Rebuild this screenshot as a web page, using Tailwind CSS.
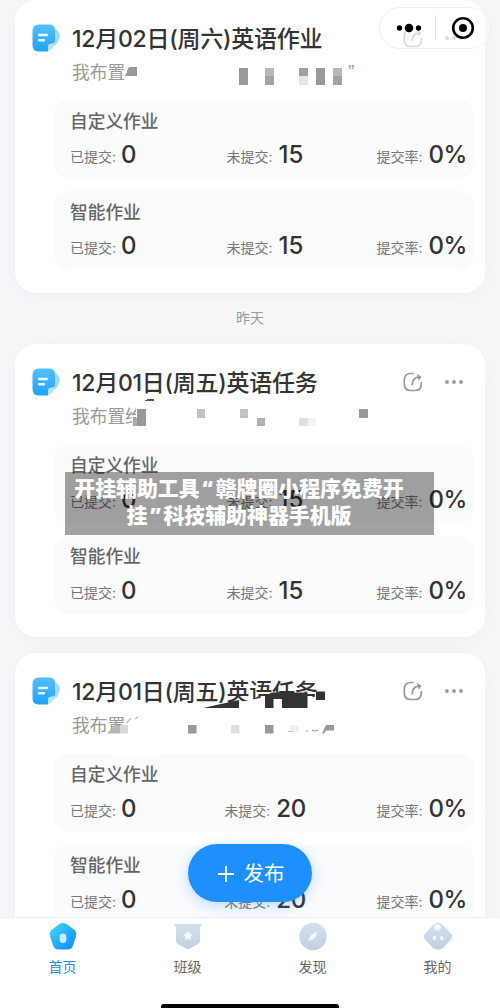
<!DOCTYPE html>
<html lang="zh-CN">
<head>
<meta charset="utf-8">
<title>作业</title>
<script src="https://cdn.jsdelivr.net/npm/@tailwindcss/browser@4"></script>
</head>
<body class="font-['Inter','Noto_Sans_CJK_SC',sans-serif] bg-[#f5f7f9]">
<svg width="0" height="0" class="absolute">
  <defs>
    <linearGradient id="doc" x1="0" y1="0" x2="0" y2="1"><stop offset="0" stop-color="#55bffa"/><stop offset="1" stop-color="#1ea2fb"/></linearGradient>
    <linearGradient id="home" x1="0" y1="0" x2="1" y2="1"><stop offset="0" stop-color="#45d8fb"/><stop offset="1" stop-color="#0e86fd"/></linearGradient>
    <linearGradient id="gray" x1="0" y1="0" x2="0" y2="1"><stop offset="0" stop-color="#d6e0eb"/><stop offset="1" stop-color="#c0cfe1"/></linearGradient>
    <symbol id="i-doc" viewBox="0 0 30 28">
      <path d="M20 4 24 5.500Q29 9 28 13L25 20 18 24Z" fill="#a3dafb"/>
      <path d="M6.500 .5H17Q23 .5 23 6V18Q22 19.500 19 19.500 16 20 16 24V27.500H6.500Q.5 27.500.5 21V7Q.5.500 6.500 .5Z" fill="url(#doc)"/>
      <path d="M16 27.500V23Q16 20 19 20 22 20 23 18.500 22 25 16 27.500Z" fill="#b5e4fd"/>
      <path d="M7 11H15M7 16.300H12" stroke="#e8f8ff" stroke-width="2.400" stroke-linecap="round"/>
    </symbol>
    <symbol id="i-share" viewBox="0 0 20 20">
      <path d="M10 1.500H8Q1.300 1.500 1.300 8V12Q1.300 18.500 8 18.500H12Q18.300 18.500 18.300 12V10.500" fill="none" stroke="#999" stroke-width="1.700" stroke-linecap="round"/>
      <path d="M9.200 12.500Q9.400 6.500 15 5.200" fill="none" stroke="#999" stroke-width="1.800" stroke-linecap="round"/>
      <path d="M13.700 1.700 18.500 4.700 15.700 8.700Z" fill="#999"/>
    </symbol>
    <symbol id="i-dots" viewBox="0 0 18 4"><g fill="#999"><circle cx="2" cy="2" r="1.900"/><circle cx="9" cy="2" r="1.900"/><circle cx="16" cy="2" r="1.900"/></g></symbol>
  </defs>
</svg>
<div class="relative w-[500px] h-[1008px] overflow-hidden flex flex-col">
  <main class="h-[917px] shrink-0 overflow-hidden px-[15px] flex flex-col">

    <section class="relative shrink-0 h-[293px] rounded-[21px] bg-white shadow-[0_4px_22px_rgba(40,60,90,0.035)] pl-[39px] pr-[11px] pt-[24px]">
      <div class="flex items-center h-[28px] -ml-[22px]">
        <svg class="w-[30px] h-[28px]"><use href="#i-doc"/></svg>
        <h2 class="ml-[10px] pt-[2px] text-[23px] leading-[28px] tracking-[-0.25px] font-medium text-[#333] whitespace-nowrap">12月02日(周六)英语作业</h2>
        <div class="ml-auto mr-[11px] flex items-center gap-[22px] opacity-60"><svg class="w-[20px] h-[20px]"><use href="#i-share"/></svg><svg class="w-[18px] h-[4px]"><use href="#i-dots"/></svg></div>
      </div>
      <p class="mt-[7px] ml-[18px] h-[28px] text-[17.700px] leading-[28px] text-[#999]">我布置</p>
      <div class="mt-[13px] flex flex-col gap-[13px]">
        <div class="h-[78px] rounded-[14px] bg-[#fafbfd] pl-[16px] pr-[7px] pt-[10px]">
          <h3 class="h-[24px] text-[17.700px] leading-[24px] font-medium text-[#666]">自定义作业</h3>
          <div class="mt-[7px] flex h-[28px] leading-[28px] whitespace-nowrap text-[14px] text-[#777]">
            <div class="w-[125px]">已提交: <b class="ml-[1px] align-[-1px] text-[24px] font-medium text-[#333]">0</b></div>
            <div class="w-[140px] text-center">未提交: <b class="ml-[2px] align-[-1px] text-[24px] font-medium text-[#333]">15</b></div>
            <div class="ml-auto">提交率: <b class="ml-[2px] align-[-1px] text-[24px] tracking-[-0.4px] font-medium text-[#333]">0%</b></div>
          </div>
        </div>
        <div class="h-[78px] rounded-[14px] bg-[#fafbfd] pl-[16px] pr-[7px] pt-[10px]">
          <h3 class="h-[24px] text-[17.700px] leading-[24px] font-medium text-[#666]">智能作业</h3>
          <div class="mt-[7px] flex h-[28px] leading-[28px] whitespace-nowrap text-[14px] text-[#777]">
            <div class="w-[125px]">已提交: <b class="ml-[1px] align-[-1px] text-[24px] font-medium text-[#333]">0</b></div>
            <div class="w-[140px] text-center">未提交: <b class="ml-[2px] align-[-1px] text-[24px] font-medium text-[#333]">15</b></div>
            <div class="ml-auto">提交率: <b class="ml-[2px] align-[-1px] text-[24px] tracking-[-0.4px] font-medium text-[#333]">0%</b></div>
          </div>
        </div>
      </div>
      <svg class="absolute left-0 top-0" width="470" height="98" viewBox="15 0 470 98" shape-rendering="crispEdges">
        <path d="M125 76 129 67H137V76Z" fill="#999"/>
        <path d="M239 67.500h9v17h-9zM316 67.500h9v17h-9z" fill="#999"/>
        <path d="M265 67.500h9v9h-9zM333 67.500h9v9h-9z" fill="#b8b8b8"/><path d="M265 76h9v8.500h-9zM299 67.500h9v9h-9zM333 76h9v8.500h-9z" fill="#a2a2a2"/>
        <path d="M299 76h9v8.500h-9z" fill="#e5e5e5"/>
      </svg>
      <span class="absolute left-[333px] top-[61px] text-[19px] leading-[22px] text-[#999] font-['Liberation_Sans',sans-serif]">”</span>
    </section>

    <p class="h-[51px] shrink-0 text-center text-[14px] leading-[50px] text-[#999]">昨天</p>

    <section class="relative shrink-0 h-[293px] rounded-[21px] bg-white shadow-[0_4px_22px_rgba(40,60,90,0.035)] pl-[39px] pr-[11px] pt-[24px]">
      <div class="flex items-center h-[28px] -ml-[22px]">
        <svg class="w-[30px] h-[28px]"><use href="#i-doc"/></svg>
        <h2 class="ml-[10px] pt-[2px] text-[23px] leading-[28px] tracking-[-0.25px] font-medium text-[#333] whitespace-nowrap">12月01日(周五)英语任务</h2>
        <div class="ml-auto mr-[11px] flex items-center gap-[22px]"><svg class="w-[20px] h-[20px]"><use href="#i-share"/></svg><svg class="w-[18px] h-[4px]"><use href="#i-dots"/></svg></div>
      </div>
      <p class="mt-[7px] ml-[18px] h-[28px] w-[64px] overflow-hidden whitespace-nowrap text-[17.700px] leading-[28px] text-[#999]">我布置给</p>
      <div class="mt-[14px] flex flex-col gap-[13px]">
        <div class="h-[78px] rounded-[14px] bg-[#fafbfd] pl-[16px] pr-[7px] pt-[9px]">
          <h3 class="h-[24px] text-[17.700px] leading-[24px] font-medium text-[#666]">自定义作业</h3>
          <div class="mt-[8px] flex h-[28px] leading-[28px] whitespace-nowrap text-[14px] text-[#777]">
            <div class="w-[125px]">已提交: <b class="ml-[1px] align-[-1px] text-[24px] font-medium text-[#333]">0</b></div>
            <div class="w-[140px] text-center">未提交: <b class="ml-[2px] align-[-1px] text-[24px] font-medium text-[#333]">15</b></div>
            <div class="ml-auto">提交率: <b class="ml-[2px] align-[-1px] text-[24px] tracking-[-0.4px] font-medium text-[#333]">0%</b></div>
          </div>
        </div>
        <div class="h-[78px] rounded-[14px] bg-[#fafbfd] pl-[16px] pr-[7px] pt-[9px]">
          <h3 class="h-[24px] text-[17.700px] leading-[24px] font-medium text-[#666]">智能作业</h3>
          <div class="mt-[8px] flex h-[28px] leading-[28px] whitespace-nowrap text-[14px] text-[#777]">
            <div class="w-[125px]">已提交: <b class="ml-[1px] align-[-1px] text-[24px] font-medium text-[#333]">0</b></div>
            <div class="w-[140px] text-center">未提交: <b class="ml-[2px] align-[-1px] text-[24px] font-medium text-[#333]">15</b></div>
            <div class="ml-auto">提交率: <b class="ml-[2px] align-[-1px] text-[24px] tracking-[-0.4px] font-medium text-[#333]">0%</b></div>
          </div>
        </div>
      </div>
      <svg class="absolute left-0 top-0" width="470" height="98" viewBox="15 344 470 98" shape-rendering="crispEdges">
        <path d="M145 400.500 148 399H154V400.500Z" fill="#555"/>
        <path d="M137 409h8.500v17h-8.500zM359 409h8.500v8.500h-8.500z" fill="#999"/><path d="M133 417.500h4v8.500h-4z" fill="#aaa"/>
        <path d="M196.500 409h8.500v8.500h-8.500zM239.500 409h8.500v8.500h-8.500z" fill="#c2c2c2"/><path d="M256.500 417.500h8.500v8.500h-8.500z" fill="#b0b0b0"/>
        <path d="M299 417.500h9v8.500h-9z" fill="#dedede"/><path d="M308 417.500h8v8.500h-8z" fill="#f3f3f3"/>
      </svg>
    </section>

    <section class="relative shrink-0 mt-[16px] h-[293px] rounded-[21px] bg-white shadow-[0_4px_22px_rgba(40,60,90,0.035)] pl-[39px] pr-[11px] pt-[24px]">
      <div class="flex items-center h-[28px] -ml-[22px]">
        <svg class="w-[30px] h-[28px]"><use href="#i-doc"/></svg>
        <h2 class="ml-[10px] pt-[2px] text-[23px] leading-[28px] tracking-[-0.25px] font-medium text-[#333] whitespace-nowrap">12月01日(周五)英语任务</h2>
        <div class="ml-auto mr-[11px] flex items-center gap-[22px]"><svg class="w-[20px] h-[20px]"><use href="#i-share"/></svg><svg class="w-[18px] h-[4px]"><use href="#i-dots"/></svg></div>
      </div>
      <p class="mt-[7px] ml-[18px] h-[28px] text-[17.700px] leading-[28px] text-[#999]">我布置</p>
      <div class="mt-[14px] flex flex-col gap-[13px]">
        <div class="h-[78px] rounded-[14px] bg-[#fafbfd] pl-[16px] pr-[7px] pt-[9px]">
          <h3 class="h-[24px] text-[17.700px] leading-[24px] font-medium text-[#666]">自定义作业</h3>
          <div class="mt-[8px] flex h-[28px] leading-[28px] whitespace-nowrap text-[14px] text-[#777]">
            <div class="w-[125px]">已提交: <b class="ml-[1px] align-[-1px] text-[24px] font-medium text-[#333]">0</b></div>
            <div class="w-[140px] text-center">未提交: <b class="ml-[2px] align-[-1px] text-[24px] tracking-[-0.4px] font-medium text-[#333]">20</b></div>
            <div class="ml-auto">提交率: <b class="ml-[2px] align-[-1px] text-[24px] tracking-[-0.4px] font-medium text-[#333]">0%</b></div>
          </div>
        </div>
        <div class="h-[78px] rounded-[14px] bg-[#fafbfd] pl-[16px] pr-[7px] pt-[9px]">
          <h3 class="h-[24px] text-[17.700px] leading-[24px] font-medium text-[#666]">智能作业</h3>
          <div class="mt-[8px] flex h-[28px] leading-[28px] whitespace-nowrap text-[14px] text-[#777]">
            <div class="w-[125px]">已提交: <b class="ml-[1px] align-[-1px] text-[24px] font-medium text-[#333]">0</b></div>
            <div class="w-[140px] text-center">未提交: <b class="ml-[2px] align-[-1px] text-[24px] tracking-[-0.4px] font-medium text-[#333]">20</b></div>
            <div class="ml-auto">提交率: <b class="ml-[2px] align-[-1px] text-[24px] tracking-[-0.4px] font-medium text-[#333]">0%</b></div>
          </div>
        </div>
      </div>
      <svg class="absolute left-0 top-0" width="470" height="110" viewBox="15 653 470 110">
        <path d="M240 702 265 697H317V712H240Z" fill="#fff"/>
        <path d="M203 708 239 700V708ZM265 695.500 272 692.500H307.500V708H282V699H273.500V708H265ZM316 691.500h9v8.500h-9z" fill="#333"/>
        <path d="M106 734 116 726H132V738H106Z" fill="#fff"/>
        <path d="M107 733.500 115 725H120V733.500Z" fill="#b5b5b5"/><path d="M120 725h8v8.500h-8z" fill="#d9d9d9"/>
        <path d="M127 723 131 718M135 719 138 717" stroke="#aaa" stroke-width="1.200"/>
        <path d="M188 725h8.500v8.500h-8.500zM265 725h8.500v8.500h-8.500z" fill="#999"/><path d="M231 725h8.500v8.500h-8.500z" fill="#dedede"/>
        <path d="M290 725h9v6.500h-9z" fill="#f0f0f0"/><path d="M288 731.500h6" stroke="#ccc"/>
        <path d="M306 731h2M312 730q3 2 6 0" stroke="#999" fill="none" stroke-width="1.200"/>
        <path d="M322 733.500 326 725H334V730.500H326L324 733.500Z" fill="#999"/>
        <path d="M106 752.500H170Q145 759 122 759 118 759 116 752.500Z" fill="#fff"/>
      </svg>
    </section>
  </main>

  <nav class="h-[91px] shrink-0 bg-white border-t border-[#eee] grid grid-cols-4 text-[14px] leading-[20px] text-[#666] text-center relative">
    <a class="pt-[4px] flex flex-col items-center gap-[6px] text-[#2a8fd0]">
      <svg width="30" height="29" viewBox="0 0 30 29"><path d="M11.500 2Q15 0 18.500 2L26 7.500Q29 10 28.200 13.500L25 23.500Q23.500 27.500 20 27.500H10Q6.500 27.500 5 23.500L1.800 13.500Q1 10 4 7.500Z" fill="url(#home)"/><rect x="11.700" y="11.500" width="6.600" height="9.500" rx="3.300" fill="#c5f0ff"/></svg>首页</a>
    <a class="pt-[4px] flex flex-col items-center gap-[6px]">
      <svg width="30" height="29" viewBox="0 0 30 29"><path d="M1.500 2H28.500V4.500H27V19Q27 21 25 22L17 26.500Q15 27.500 13 26.500L5 22Q3 21 3 19V4.500H1.500Z" fill="url(#gray)"/><path d="M15 8.700 16.700 11.700 19.700 12.500 17.500 14.800 17.900 18.300 15 16.800 12.100 18.300 12.500 14.800 10.300 12.500 13.300 11.700Z" fill="#f3f8fd"/></svg>班级</a>
    <a class="pt-[4px] flex flex-col items-center gap-[6px]">
      <svg width="30" height="29" viewBox="0 0 30 29"><circle cx="15" cy="14.500" r="13.700" fill="url(#gray)"/><path d="M10.500 19Q11.500 11.500 19.500 10 19 17 10.500 19Z" fill="#f3f8fd"/></svg>发现</a>
    <a class="pt-[4px] flex flex-col items-center gap-[6px]">
      <svg width="30" height="29" viewBox="0 0 30 29"><path d="M11 2Q15-.5 19 2L27.500 11Q31 14.500 27.500 18L20 26Q15 29.500 10 26L2.500 18Q-1 14.500 2.500 11Z" fill="url(#gray)"/><circle cx="14.500" cy="5.500" r="3.200" fill="#f3f8fd"/><ellipse cx="11.500" cy="16" rx="1.800" ry="2.200" fill="#f3f8fd"/><ellipse cx="18.800" cy="16" rx="1.800" ry="2.200" fill="#f3f8fd"/></svg>我的</a>
    <div class="absolute left-[161px] bottom-0 w-[178px] h-[4px] rounded-t-[3px] bg-black"></div>
  </nav>

  <button class="absolute left-[188px] top-[844px] w-[124px] h-[58px] rounded-full bg-[#1e8fff] shadow-[0_3px_14px_rgba(30,143,255,0.3)] flex items-center justify-center gap-[10px] pl-[2px] pt-[2px] text-white text-[20.500px]">
    <svg width="16" height="16" viewBox="0 0 16 16"><path d="M8 0V16M0 8H16" stroke="#fff" stroke-width="1.800"/></svg>发布</button>

  <div class="absolute left-[379px] top-[7px] w-[112px] h-[42px] rounded-full bg-white/40 border border-[#f0f0f0]">
    <svg width="110" height="40" viewBox="380 8 110 40"><circle cx="399.500" cy="28" r="2.700"/><circle cx="409" cy="28" r="4.300"/><circle cx="418.500" cy="28" r="2.700"/><path d="M435.500 15.500V40" stroke="#e3e3e3"/><circle cx="463" cy="28" r="9.800" fill="#fff" stroke="#000" stroke-width="2.600"/><circle cx="463" cy="28" r="4"/></svg>
  </div>

  <div class="absolute left-[65px] top-[472px] w-[369px] h-[63px] bg-[#030303]/37 pr-[21px] pt-[2px] text-center whitespace-nowrap text-[20.900px] leading-[26px] font-black text-white font-['Noto_Sans_CJK_SC',sans-serif]">开挂辅助工具<span class="inline-block w-[16px] text-center font-['Open_Sans',sans-serif] font-extrabold">“</span>赣牌圈小程序免费开<br>挂<span class="inline-block w-[16px] text-center font-['Open_Sans',sans-serif] font-extrabold">”</span>科技辅助神器手机版</div>
</div>
</body>
</html>
